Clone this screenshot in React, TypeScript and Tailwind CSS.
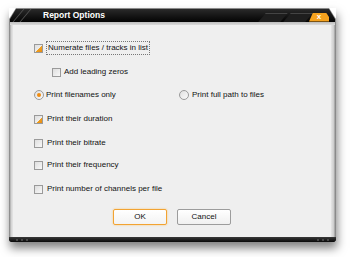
import React from "react";

type CheckProps = { checked?: boolean };

const Check: React.FC<CheckProps> = ({ checked }) => (
  <span className="relative block w-[9px] h-[9px] shrink-0 border border-[#9a9a9a] bg-gradient-to-br from-[#dedede] to-[#f8f8f8] overflow-hidden">
    {checked && (
      <span className="absolute right-0 bottom-0 w-[6px] h-[6px] bg-gradient-to-br from-transparent from-50% via-[#f0a020] via-50% to-[#e88a10]" />
    )}
  </span>
);

const Radio: React.FC<CheckProps> = ({ checked }) => (
  <span className="flex items-center justify-center w-[10px] h-[10px] shrink-0 rounded-full border border-[#9a9a9a] bg-gradient-to-br from-[#e0e0e0] to-[#fafafa]">
    {checked && <span className="block w-[4px] h-[4px] rounded-full bg-[#f08c10]" />}
  </span>
);

const App: React.FC = () => {
  return (
    <div
      className="w-[350px] h-[257px] bg-white pt-[8px] pl-[9px] text-[8px] text-[#111]"
      style={{ fontFamily: '"Liberation Sans", Arial, sans-serif' }}
    >
      <div className="w-[327px] flex flex-col shadow-[1px_6px_9px_rgba(0,0,0,0.5)]">
        {/* Title bar */}
        <div className="h-[17px] flex flex-col [clip-path:polygon(7px_0,calc(100%-7px)_0,100%_11px,100%_100%,0_100%,0_11px)] bg-[#8a8a8a] p-[1px] pb-0">
          <div className="h-[13px] flex items-center [clip-path:polygon(6px_0,calc(100%-6px)_0,100%_10px,100%_100%,0_100%,0_10px)] bg-gradient-to-b from-[#2a2a2a] to-[#050505]">
            <div className="w-[20px] h-full ml-[8px] flex gap-[6px]">
              <span className="block w-[1px] h-full bg-[#555] skew-x-[-40deg]" />
              <span className="block w-[1px] h-full bg-[#555] skew-x-[-40deg]" />
            </div>
            <span className="ml-[5px] text-white font-bold text-[8.5px] leading-none">
              Report Options
            </span>
            <div className="flex-1" />
            <div className="h-full flex items-center">
              <span className="block w-[22px] h-[9px] mt-[3px] bg-[#1e1e1e] border-t border-[#444] skew-x-[-40deg]" />
              <span className="block w-[22px] h-[9px] mt-[3px] ml-[3px] bg-[#1e1e1e] border-t border-[#444] skew-x-[-40deg]" />
            </div>
            <div className="h-[9px] w-[20px] mt-[3px] mr-[6px] flex items-center justify-center bg-[#f5a21e] [clip-path:polygon(4px_0,calc(100%-3px)_0,100%_50%,100%_100%,0_100%)]">
              <span className="text-white font-bold text-[8px] leading-none mt-[-1px]">x</span>
            </div>
          </div>
          <div className="h-[3px] bg-gradient-to-b from-[#bdbdbd] to-[#dcdcdc]" />
        </div>

        {/* Body */}
        <div className="flex h-[212px]">
          <div className="w-[4px] bg-gradient-to-r from-[#7a7a7a] via-[#cfcfcf] to-[#e6e6e6]" />
          <div className="flex-1 bg-[#efefef] flex flex-col pt-[16px] pl-[21px]">
            <div className="h-[14px] flex items-center gap-[3px]">
              <Check checked />
              <span className="border border-dotted border-[#777] px-[1px] h-[14px] flex items-center">
                Numerate files / tracks in list
              </span>
            </div>
            <div className="h-[14px] mt-[10px] pl-[18px] flex items-center gap-[3px]">
              <Check />
              <span>Add leading zeros</span>
            </div>
            <div className="h-[14px] mt-[9px] flex items-center">
              <div className="w-[145px] flex items-center gap-[2px]">
                <Radio checked />
                <span>Print filenames only</span>
              </div>
              <div className="flex items-center gap-[3px]">
                <Radio />
                <span>Print full path to files</span>
              </div>
            </div>
            <div className="h-[14px] mt-[10px] flex items-center gap-[4px]">
              <Check checked />
              <span>Print their duration</span>
            </div>
            <div className="h-[14px] mt-[10px] flex items-center gap-[4px]">
              <Check />
              <span>Print their bitrate</span>
            </div>
            <div className="h-[14px] mt-[8px] flex items-center gap-[4px]">
              <Check />
              <span>Print their frequency</span>
            </div>
            <div className="h-[14px] mt-[10px] flex items-center gap-[4px]">
              <Check />
              <span>Print number of channels per file</span>
            </div>
            <div className="mt-[13px] -ml-[21px] flex justify-center gap-[10px]">
              <button className="w-[54px] h-[16px] flex items-center justify-center rounded-[2px] border border-[#f2a332] bg-gradient-to-b from-white to-[#f3f3f3] shadow-[0_0_2px_#f7c06a] text-[8px]">
                OK
              </button>
              <button className="w-[54px] h-[16px] flex items-center justify-center rounded-[2px] border border-[#9c9c9c] bg-gradient-to-b from-white to-[#f0f0f0] text-[8px]">
                Cancel
              </button>
            </div>
          </div>
          <div className="w-[5px] bg-gradient-to-r from-[#e6e6e6] via-[#cfcfcf] to-[#7a7a7a]" />
        </div>

        {/* Bottom bar */}
        <div className="h-[5px] rounded-b-[2px] bg-gradient-to-b from-[#3a3a3a] to-[#0a0a0a] flex items-center justify-between px-[7px]">
          <div className="flex gap-[3px]">
            <span className="block w-[2px] h-[2px] rounded-full bg-[#555]" />
            <span className="block w-[2px] h-[2px] rounded-full bg-[#555]" />
            <span className="block w-[2px] h-[2px] rounded-full bg-[#555]" />
          </div>
          <div className="flex gap-[3px]">
            <span className="block w-[2px] h-[2px] rounded-full bg-[#555]" />
            <span className="block w-[2px] h-[2px] rounded-full bg-[#555]" />
            <span className="block w-[2px] h-[2px] rounded-full bg-[#555]" />
          </div>
        </div>
      </div>
    </div>
  );
};

export default App;
